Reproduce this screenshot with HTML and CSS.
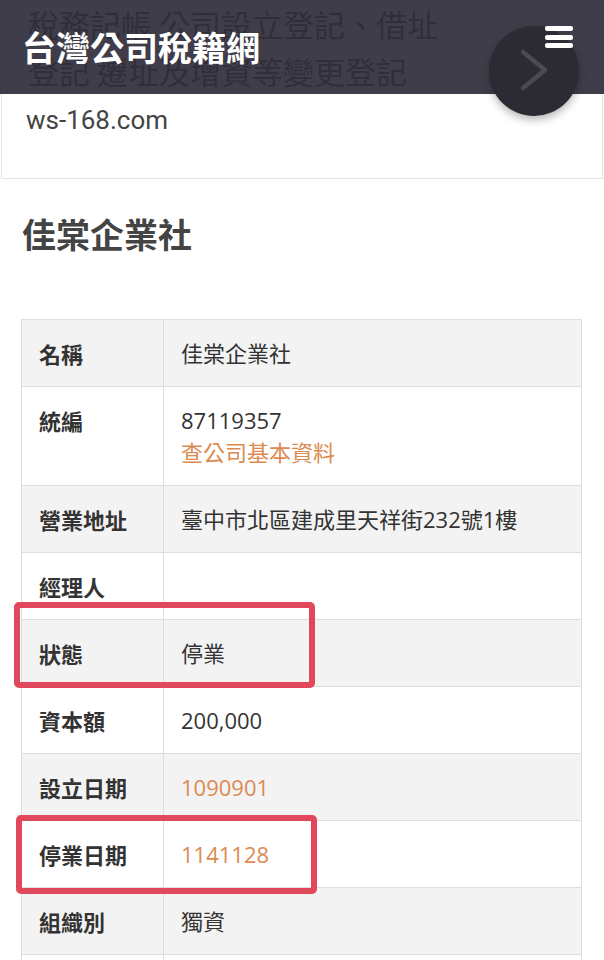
FILE: index.html
```html
<!DOCTYPE html>
<html lang="zh-Hant">
<head>
<meta charset="utf-8">
<title>佳棠企業社 - 台灣公司稅籍網</title>
<link rel="stylesheet" href="styles.css">
</head>
<body>
<div class="page">
  <div class="ad">
    <div class="ad-line">稅務記帳 公司設立登記、借址</div>
    <div class="ad-line">登記 遷址及增資等變更登記</div>
    <div class="ad-url">ws-168.com</div>
  </div>

  <h1 class="company">佳棠企業社</h1>

  <table class="info">
    <tr class="alt"><th>名稱</th><td>佳棠企業社</td></tr>
    <tr><th>統編</th><td>87119357<br><a class="link" href="#">查公司基本資料</a></td></tr>
    <tr class="alt"><th>營業地址</th><td>臺中市北區建成里天祥街232號1樓</td></tr>
    <tr><th>經理人</th><td></td></tr>
    <tr class="alt"><th>狀態</th><td>停業</td></tr>
    <tr><th>資本額</th><td>200,000</td></tr>
    <tr class="alt"><th>設立日期</th><td><a class="link" href="#">1090901</a></td></tr>
    <tr><th>停業日期</th><td><a class="link" href="#">1141128</a></td></tr>
    <tr class="alt"><th>組織別</th><td>獨資</td></tr>
    <tr><th>&nbsp;</th><td>&nbsp;</td></tr>
  </table>

  <header class="topbar">
    <div class="brand">台灣公司稅籍網</div>
    <div class="menu" aria-label="menu"><span></span><span></span><span></span></div>
  </header>

  <div class="fab">
    <svg width="90" height="90" viewBox="0 0 90 90"><polyline points="34,26 56,44 34,62" fill="none" stroke="#4b4955" stroke-width="4.5" stroke-linecap="round" stroke-linejoin="round"/></svg>
  </div>

  <div class="mark mark-status"></div>
  <div class="mark mark-stop"></div>
</div>
</body>
</html>
```

FILE: styles.css
```css
html, body {
  margin: 0;
  padding: 0;
  background: #ffffff;
}

body {
  font-family: "Open Sans", "Noto Sans CJK TC", sans-serif;
  color: #333333;
  overflow: hidden;
}

.page {
  position: relative;
  width: 604px;
  height: 960px;
  overflow: hidden;
}

.ad {
  margin: 0 1px;
  padding: 0 24px 32px 26px;
  border: 1px solid #e3e3e3;
  border-top: none;
  color: #444444;
}

.ad-line {
  font-family: "Noto Sans CJK TC", sans-serif;
  font-size: 31px;
  line-height: 47px;
  white-space: nowrap;
}

.ad-url {
  font-family: Roboto, "Noto Sans", sans-serif;
  font-size: 26px;
  line-height: 52px;
  margin-left: -2px;
}

.company {
  margin: 31px 0 0 22px;
  font-family: "Noto Sans CJK TC", sans-serif;
  font-size: 34px;
  line-height: 48px;
  font-weight: 700;
  color: #444444;
}

.info {
  margin: 61px 0 0 21px;
  width: 561px;
  border-collapse: collapse;
  font-size: 22px;
  line-height: 32px;
}

.info th,
.info td {
  border: 1px solid #dedede;
  padding: 17px 16px 17px 17px;
  text-align: left;
  vertical-align: top;
}

.info th {
  width: 108px;
  font-weight: 700;
  color: #333333;
  font-family: "Noto Sans CJK TC", sans-serif;
}

.info td {
  font-weight: 400;
  color: #333333;
}

.info tr.alt th,
.info tr.alt td {
  background: #f3f3f3;
}

.link {
  color: #dc8a52;
  text-decoration: none;
}

.topbar {
  position: absolute;
  top: 0;
  left: 0;
  right: 0;
  height: 94px;
  background: rgba(47, 44, 58, 0.92);
  display: flex;
  align-items: center;
  justify-content: space-between;
  padding: 0 31px 0 22px;
}

.brand {
  font-family: "Noto Sans CJK TC", sans-serif;
  font-size: 34px;
  font-weight: 700;
  color: #ffffff;
  line-height: 48px;
}

.menu {
  align-self: flex-start;
  margin-top: 26px;
  width: 28px;
  display: flex;
  flex-direction: column;
  gap: 3.5px;
  position: relative;
  z-index: 4;
}

.menu span {
  display: block;
  height: 5px;
  border-radius: 2px;
  background: #ffffff;
}

.fab {
  position: absolute;
  left: 489px;
  top: 26px;
  width: 90px;
  height: 90px;
  border-radius: 50%;
  background: #2c2a33;
  box-shadow: 0 4px 8px rgba(0, 0, 0, 0.28);
  z-index: 3;
}

.fab svg {
  display: block;
}

.mark {
  position: absolute;
  border: 6px solid #e1485b;
  border-radius: 5px;
  box-sizing: border-box;
  z-index: 1;
}

.mark-status {
  left: 14px;
  top: 602px;
  width: 301px;
  height: 86px;
}

.mark-stop {
  left: 16px;
  top: 815px;
  width: 301px;
  height: 79px;
}
```
